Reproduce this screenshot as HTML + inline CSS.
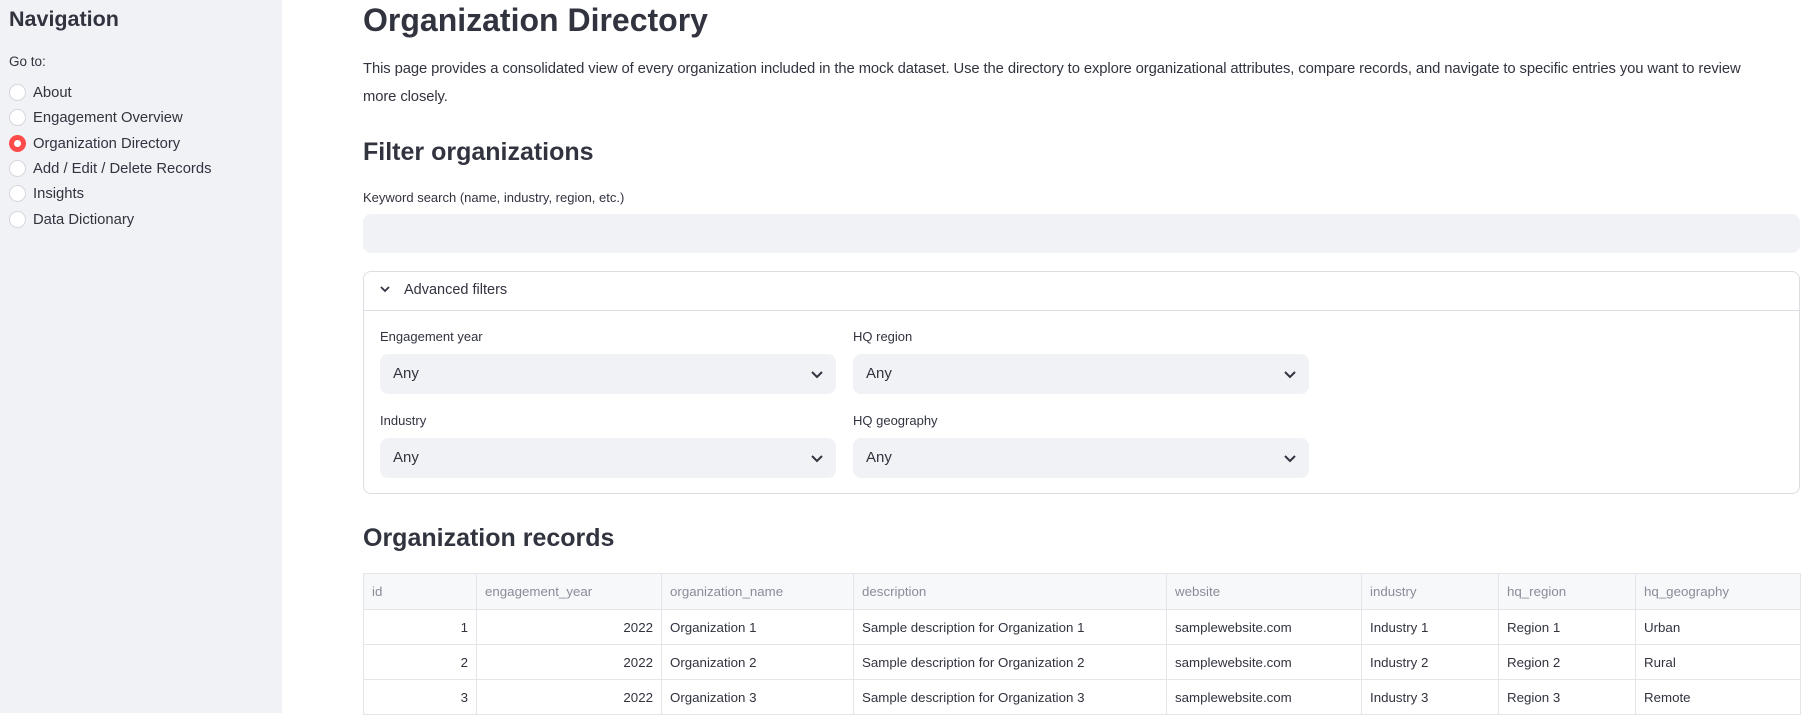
<!DOCTYPE html>
<html><head><meta charset="utf-8"><style>
*{box-sizing:border-box;margin:0;padding:0}
body{width:1815px;height:713px;overflow:hidden;background:#fff;font-family:"Liberation Sans",sans-serif;color:#31333f;position:relative}
.sb{position:absolute;left:0;top:0;width:282px;height:713px;background:#f0f2f6}
.a{position:absolute;white-space:nowrap}
.r{position:absolute;left:9px;width:17px;height:17px;border-radius:50%;background:#fff;border:1px solid #d5d7dd}
.r.on{background:#ff4b4b;border:none}
.r.on::after{content:"";position:absolute;left:5px;top:5px;width:7px;height:7px;border-radius:50%;background:#fff}
.ri{position:absolute;left:33px;font-size:14.8px}
.box{position:absolute;background:#f0f2f6;border-radius:8px}
.sel{position:absolute;background:#f0f2f6;border-radius:8px;height:40px;font-size:15px;padding:11px 13px}
.sel svg{position:absolute;right:12px;top:13px}
table{position:absolute;left:363px;top:573px;border-collapse:collapse;font-size:13.3px}
td,th{border:1px solid #e4e5e8;padding:0 8px;height:35px;font-weight:normal;text-align:left}
th{background:#f7f8fa;color:#8a8c98;height:36px}
td.n{text-align:right}
</style></head><body>
<div class="sb">
<div class="a" style="left:9px;top:7px;font-size:21.5px;font-weight:bold">Navigation</div>
<div class="a" style="left:9px;top:54px;font-size:13.5px">Go to:</div>
<div class="r" style="top:84px"></div><div class="ri" style="top:85px">About</div>
<div class="r" style="top:109px"></div><div class="ri" style="top:110px">Engagement Overview</div>
<div class="r on" style="top:135px"></div><div class="ri" style="top:136px">Organization Directory</div>
<div class="r" style="top:160px"></div><div class="ri" style="top:161px">Add / Edit / Delete Records</div>
<div class="r" style="top:185px"></div><div class="ri" style="top:186px">Insights</div>
<div class="r" style="top:211px"></div><div class="ri" style="top:212px">Data Dictionary</div>
</div>
<div class="a" style="left:363px;top:2px;font-size:32px;font-weight:bold">Organization Directory</div>
<div class="a" style="left:363px;top:55px;font-size:14.8px;letter-spacing:-0.1px;line-height:28px;white-space:normal;width:1405px">This page provides a consolidated view of every organization included in the mock dataset. Use the directory to explore organizational attributes, compare records, and navigate to specific entries you want to review more closely.</div>
<div class="a" style="left:363px;top:138px;font-size:25px;font-weight:bold">Filter organizations</div>
<div class="a" style="left:363px;top:190px;font-size:13px">Keyword search (name, industry, region, etc.)</div>
<div class="box" style="left:363px;top:214px;width:1437px;height:39px"></div>
<div style="position:absolute;left:363px;top:271px;width:1437px;height:223px;border:1px solid #dcdee3;border-radius:8px"></div>
<div style="position:absolute;left:364px;top:310px;width:1435px;border-top:1px solid #dcdee3"></div>
<svg class="a" style="left:379px;top:284px" width="12" height="10" viewBox="0 0 12 10"><path d="M2 3l4 4 4-4" fill="none" stroke="#31333f" stroke-width="1.8"/></svg>
<div class="a" style="left:404px;top:282px;font-size:14.5px">Advanced filters</div>
<div class="a" style="left:380px;top:329px;font-size:13px">Engagement year</div>
<div class="a" style="left:853px;top:329px;font-size:13px">HQ region</div>
<div class="sel" style="left:380px;top:354px;width:456px">Any<svg width="14" height="14" viewBox="0 0 14 14"><path d="M2 5l5 5 5-5" fill="none" stroke="#31333f" stroke-width="2"/></svg></div>
<div class="sel" style="left:853px;top:354px;width:456px">Any<svg width="14" height="14" viewBox="0 0 14 14"><path d="M2 5l5 5 5-5" fill="none" stroke="#31333f" stroke-width="2"/></svg></div>
<div class="a" style="left:380px;top:413px;font-size:13px">Industry</div>
<div class="a" style="left:853px;top:413px;font-size:13px">HQ geography</div>
<div class="sel" style="left:380px;top:438px;width:456px">Any<svg width="14" height="14" viewBox="0 0 14 14"><path d="M2 5l5 5 5-5" fill="none" stroke="#31333f" stroke-width="2"/></svg></div>
<div class="sel" style="left:853px;top:438px;width:456px">Any<svg width="14" height="14" viewBox="0 0 14 14"><path d="M2 5l5 5 5-5" fill="none" stroke="#31333f" stroke-width="2"/></svg></div>
<div class="a" style="left:363px;top:524px;font-size:25px;font-weight:bold">Organization records</div>
<table>
<colgroup><col style="width:113px"><col style="width:185px"><col style="width:192px"><col style="width:313px"><col style="width:195px"><col style="width:137px"><col style="width:137px"><col style="width:165px"></colgroup>
<tr><th>id</th><th>engagement_year</th><th>organization_name</th><th>description</th><th>website</th><th>industry</th><th>hq_region</th><th>hq_geography</th></tr>
<tr><td class="n">1</td><td class="n">2022</td><td>Organization 1</td><td>Sample description for Organization 1</td><td>samplewebsite.com</td><td>Industry 1</td><td>Region 1</td><td>Urban</td></tr>
<tr><td class="n">2</td><td class="n">2022</td><td>Organization 2</td><td>Sample description for Organization 2</td><td>samplewebsite.com</td><td>Industry 2</td><td>Region 2</td><td>Rural</td></tr>
<tr><td class="n">3</td><td class="n">2022</td><td>Organization 3</td><td>Sample description for Organization 3</td><td>samplewebsite.com</td><td>Industry 3</td><td>Region 3</td><td>Remote</td></tr>
</table>
</body></html>
